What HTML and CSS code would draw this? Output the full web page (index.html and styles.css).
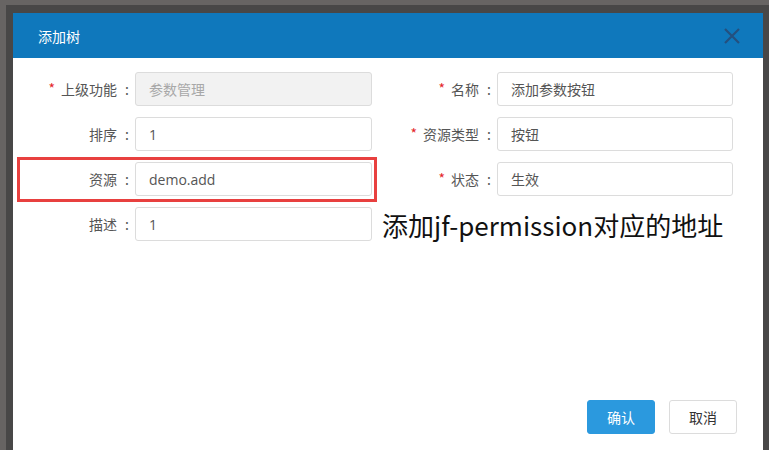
FILE: index.html
```html
<!DOCTYPE html>
<html lang="zh">
<head>
<meta charset="utf-8">
<title>添加树</title>
<link rel="stylesheet" href="styles.css">
</head>
<body>
<div class="frame">
  <div class="dialog">
    <div class="header">
      <span class="title">添加树</span>
      <svg class="close" width="18" height="18" viewBox="0 0 18 18"><path d="M2 2 L16 16 M16 2 L2 16" stroke="#24507f" stroke-width="2.2" fill="none"/></svg>
    </div>
    <div class="body">
      <div class="form">
        <label class="lbl"><span class="req">*</span>上级功能<span class="colon">:</span></label>
        <div class="inp disabled">参数管理</div>
        <label class="lbl"><span class="req">*</span>名称<span class="colon">:</span></label>
        <div class="inp">添加参数按钮</div>

        <label class="lbl">排序<span class="colon">:</span></label>
        <div class="inp">1</div>
        <label class="lbl"><span class="req">*</span>资源类型<span class="colon">:</span></label>
        <div class="inp">按钮</div>

        <label class="lbl">资源<span class="colon">:</span></label>
        <div class="inp">demo.add</div>
        <label class="lbl"><span class="req">*</span>状态<span class="colon">:</span></label>
        <div class="inp">生效</div>

        <label class="lbl">描述<span class="colon">:</span></label>
        <div class="inp">1</div>
      </div>
      <div class="highlight"></div>
      <div class="note">添加jf-permission对应的地址</div>
      <div class="footer">
        <button class="btn primary">确认</button>
        <button class="btn">取消</button>
      </div>
    </div>
  </div>
</div>
</body>
</html>
```
FILE: styles.css
```css
html, body {
  margin: 0;
  padding: 0;
  height: 100%;
  overflow: hidden;
}
body {
  background: #676463;
  font-family: "Noto Sans CJK SC", "Open Sans", sans-serif;
}
.frame {
  margin: 5px 0 0 6px;
  padding: 8px 6px 0 7px;
  background: #484747;
  height: 445px;
  box-sizing: border-box;
}
.dialog {
  background: #fff;
  height: 437px;
  display: flex;
  flex-direction: column;
}
.header {
  height: 45px;
  background: #0f78bc;
  display: flex;
  align-items: center;
  justify-content: space-between;
  padding: 0 22px 0 25px;
  flex-shrink: 0;
}
.title {
  color: #fff;
  font-size: 14px;
}
.close {
  display: block;
}
.body {
  position: relative;
  flex: 1;
  display: flex;
  flex-direction: column;
  padding-top: 14px;
}
.form {
  display: grid;
  grid-template-columns: 122px 237px 125px 236px;
  grid-auto-rows: 34px;
  row-gap: 11px;
}
.lbl {
  display: flex;
  align-items: center;
  justify-content: flex-end;
  font-size: 14px;
  color: #555;
  padding-right: 6px;
}
.req {
  color: #e4262a;
  margin-right: 6px;
  font-size: 14px;
  position: relative;
  top: -1px;
}
.colon {
  margin-left: 8px;
}
.inp {
  border: 1px solid #dcdcdc;
  border-radius: 3px;
  display: flex;
  align-items: center;
  padding-left: 13px;
  font-size: 14px;
  color: #555;
  font-family: "Open Sans", "Noto Sans CJK SC", sans-serif;
}
.inp.disabled {
  background: #f2f2f2;
  color: #a8a8a8;
}
.highlight {
  position: absolute;
  left: 4px;
  top: 99px;
  width: 354px;
  height: 39px;
  border: 3px solid #e8403f;
}
.note {
  position: absolute;
  left: 369px;
  top: 150px;
  font-size: 26px;
  color: #111;
  line-height: 34px;
  white-space: nowrap;
}
.footer {
  margin-top: auto;
  display: flex;
  justify-content: flex-end;
  gap: 14px;
  padding: 0 26px 16px 0;
}
.btn {
  width: 68px;
  height: 34px;
  border: 1px solid #dcdcdc;
  border-radius: 3px;
  background: #fff;
  color: #333;
  font-size: 14px;
  font-family: "Noto Sans CJK SC", sans-serif;
  padding: 0;
}
.btn.primary {
  background: #2b99de;
  border-color: #2b99de;
  color: #fff;
}
```
